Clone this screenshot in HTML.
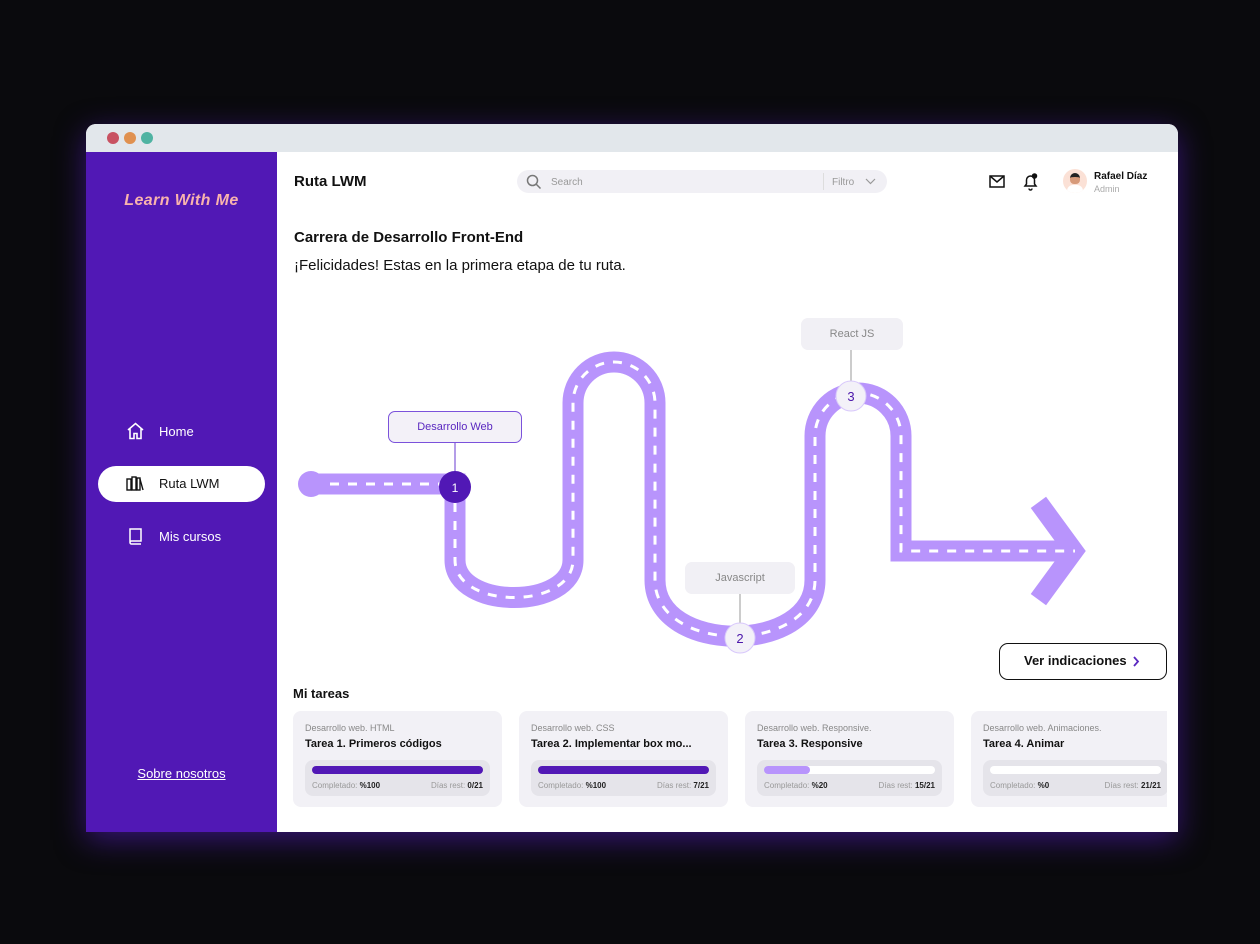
<!DOCTYPE html>
<html><head><meta charset="utf-8"><style>
*{margin:0;padding:0;box-sizing:border-box}
body{width:1260px;height:944px;background:#0a0a0d;position:relative;overflow:hidden;font-family:"Liberation Sans",Arial,sans-serif;color:#111}
.abs{position:absolute}
.win{left:86px;top:124px;width:1092px;height:708px;border-radius:10px 10px 0 0;overflow:hidden;background:#fff;box-shadow:0 8px 30px rgba(90,30,200,.55)}
.bar{left:0;top:0;width:1092px;height:28px;background:#e2e7eb}
.dot{top:8px;width:12px;height:12px;border-radius:50%}
.side{left:0;top:28px;width:191px;height:680px;background:#5118b5}
.logo{left:0;width:191px;top:40px;text-align:center;color:#f9b3ad;font:italic bold 16px "Liberation Sans",sans-serif;letter-spacing:.4px}
.nav{left:40px;color:#fff;font-size:13px;display:flex;align-items:center;gap:14px}
.card{width:209px;height:96px;background:#f2f1f6;border-radius:8px}
.card .c1{position:absolute;left:12px;top:12px;font-size:9px;color:#888}
.card .c2{position:absolute;left:12px;top:27px;font-size:11px;font-weight:bold;color:#111}
.card .pb{position:absolute;left:12px;top:49px;right:12px;height:36px;background:#e5e4ea;border-radius:8px}
.track{position:absolute;left:7px;right:7px;top:6px;height:8px;border-radius:4px;background:#fff}
.fill{height:8px;border-radius:4px}
.lbl{position:absolute;top:21px;font-size:8px;color:#999}
.lbl b{color:#222;font-weight:bold}
.tag{font-size:11px;text-align:center;border-radius:7px}
</style></head><body>
<div class="abs win">
 <div class="abs bar"></div>
 <div class="abs dot" style="left:21px;background:#c85262"></div>
 <div class="abs dot" style="left:38px;background:#e09150"></div>
 <div class="abs dot" style="left:55px;background:#4fb3a2"></div>
 <div class="abs side">
  <div class="abs logo">Learn With Me</div>
  <div class="abs nav" style="top:270px"><svg width="19" height="18" viewBox="0 0 19 18" fill="none" stroke="#fff" stroke-width="1.6"><path d="M2 8 9.5 1.5 17 8M4 6.5V16.5h4v-5h3v5h4V6.5"/></svg>Home</div>
  <div class="abs" style="left:12px;top:314px;width:167px;height:36px;background:#fff;border-radius:18px"></div>
  <div class="abs nav" style="top:323px;color:#111"><svg width="19" height="16" viewBox="0 0 19 16" fill="none" stroke="#111" stroke-width="1.4"><rect x="1" y="4" width="4" height="11"/><rect x="6" y="2" width="4" height="13"/><rect x="11" y="3" width="3" height="12"/><path d="M14 4l3 11"/></svg>Ruta LWM</div>
  <div class="abs nav" style="top:375px"><svg width="19" height="18" viewBox="0 0 19 18" fill="none" stroke="#fff" stroke-width="1.5"><path d="M4 2h11v12H5.5A1.5 1.5 0 0 0 4 15.5V2zM4 15.5A1.5 1.5 0 0 0 5.5 17H15"/></svg>Mis cursos</div>
  <div class="abs" style="left:0;width:191px;top:614px;text-align:center;color:#fff;font-size:13px;text-decoration:underline">Sobre nosotros</div>
 </div>
</div>
<!-- header -->
<div class="abs" style="left:294px;top:173px;font-size:15px;font-weight:bold">Ruta LWM</div>
<div class="abs" style="left:517px;top:170px;width:370px;height:23px;background:#f1f0f5;border-radius:12px"></div>
<svg class="abs" style="left:526px;top:174px" width="16" height="16" viewBox="0 0 16 16" fill="none" stroke="#777" stroke-width="1.5"><circle cx="6.5" cy="6.5" r="5"/><path d="M10 10l4.5 4.5"/></svg>
<div class="abs" style="left:551px;top:177px;font-size:10px;color:#999">Search</div>
<div class="abs" style="left:823px;top:173px;width:1px;height:17px;background:#ddd"></div>
<div class="abs" style="left:832px;top:177px;font-size:10px;color:#999">Filtro</div>
<svg class="abs" style="left:865px;top:178px" width="11" height="7" viewBox="0 0 11 7" fill="none" stroke="#999" stroke-width="1.2"><path d="M1 1l4.5 4.5L10 1"/></svg>
<svg class="abs" style="left:989px;top:175px" width="16" height="13" viewBox="0 0 16 13" fill="none" stroke="#111" stroke-width="1.5"><rect x="1" y="1" width="14" height="11"/><path d="M1 1l7 6 7-6"/></svg>
<svg class="abs" style="left:1022px;top:172px" width="17" height="19" viewBox="0 0 17 19" fill="none" stroke="#111" stroke-width="1.5"><path d="M3 14h11l-1.5-2V8a4 4 0 0 0-8 0v4zM7 16.5a1.5 1.5 0 0 0 3 0"/><circle cx="12.5" cy="4" r="2" fill="#111"/></svg>
<div class="abs" style="left:1063px;top:169px;width:24px;height:24px;border-radius:50%;background:#fbe1d6;overflow:hidden"><div class="abs" style="left:7px;top:4px;width:10px;height:11px;border-radius:5px 5px 4px 4px;background:#d79a7a;border-top:4px solid #222"></div><div class="abs" style="left:4px;top:16px;width:16px;height:10px;border-radius:6px 6px 0 0;background:#fff"></div></div>
<div class="abs" style="left:1094px;top:171px;font-size:10px;font-weight:bold">Rafael Díaz</div>
<div class="abs" style="left:1094px;top:184px;font-size:9px;color:#aaa">Admin</div>
<div class="abs" style="left:294px;top:229px;font-size:15px;font-weight:bold">Carrera de Desarrollo Front-End</div>
<div class="abs" style="left:294px;top:257px;font-size:15px">¡Felicidades! Estas en la primera etapa de tu ruta.</div>
<!-- road -->
<svg class="abs" style="left:0;top:0" width="1260" height="944">
 <g fill="none" stroke="#b894fc" stroke-width="21">
  <path d="M311 484H455V560C455 610 573 610 573 560V403A41 41 0 0 1 655 403V580C655 655 815 655 815 580V436A43 43 0 0 1 901 436V551H1075"/>
  <path d="M1044 510 1074 551 1044 592" stroke-width="19" stroke-linecap="square"/>
 </g>
 <circle cx="311" cy="484" r="13" fill="#b894fc"/>
 <path d="M330 484H455V560C455 610 573 610 573 560V403A41 41 0 0 1 655 403V580C655 655 815 655 815 580V436A43 43 0 0 1 901 436V551H1075" fill="none" stroke="#fff" stroke-width="3" stroke-dasharray="9 9"/>
 <line x1="455" y1="442" x2="455" y2="473" stroke="#6a3bd0"/>
 <line x1="740" y1="592" x2="740" y2="625" stroke="#999"/>
 <line x1="851" y1="350" x2="851" y2="382" stroke="#999"/>
 <circle cx="455" cy="487" r="16" fill="#5118b5"/>
 <text x="455" y="492" text-anchor="middle" fill="#fff" font-size="12" font-family="Liberation Sans">1</text>
 <circle cx="740" cy="638" r="15" fill="#f3f1f8" stroke="#d8c8fb"/>
 <text x="740" y="643" text-anchor="middle" fill="#4b16aa" font-size="13" font-family="Liberation Sans">2</text>
 <circle cx="851" cy="396" r="15" fill="#f3f1f8" stroke="#d8c8fb"/>
 <text x="851" y="401" text-anchor="middle" fill="#4b16aa" font-size="13" font-family="Liberation Sans">3</text>
</svg>
<div class="abs tag" style="left:388px;top:411px;width:134px;height:32px;line-height:30px;background:#f3f1f8;border:1px solid #7b52db;color:#5a28c0">Desarrollo Web</div>
<div class="abs tag" style="left:685px;top:562px;width:110px;height:32px;line-height:32px;background:#f1f0f5;color:#888">Javascript</div>
<div class="abs tag" style="left:801px;top:318px;width:102px;height:32px;line-height:32px;background:#f1f0f5;color:#888">React JS</div>
<div class="abs" style="left:999px;top:643px;width:168px;height:37px;border:1.5px solid #111;border-radius:9px;font-size:13px;font-weight:bold;line-height:34px;padding-left:24px">Ver indicaciones</div>
<svg class="abs" style="left:1132px;top:656px" width="8" height="11" viewBox="0 0 8 11" fill="none" stroke="#5a28c0" stroke-width="1.8"><path d="M2 1l4 4.5L2 10"/></svg>
<div class="abs" style="left:293px;top:686px;font-size:13px;font-weight:bold">Mi tareas</div>
<div class="abs" style="left:293px;top:711px;width:874px;height:96px;overflow:hidden">
 <div class="abs card" style="left:0"><div class="c1">Desarrollo web. HTML</div><div class="c2">Tarea 1. Primeros códigos</div><div class="pb"><div class="track"><div class="fill" style="width:100%;background:#5118b5"></div></div><div class="lbl" style="left:7px">Completado: <b>%100</b></div><div class="lbl" style="right:7px">Días rest: <b>0/21</b></div></div></div>
 <div class="abs card" style="left:226px"><div class="c1">Desarrollo web. CSS</div><div class="c2">Tarea 2. Implementar box mo...</div><div class="pb"><div class="track"><div class="fill" style="width:100%;background:#5118b5"></div></div><div class="lbl" style="left:7px">Completado: <b>%100</b></div><div class="lbl" style="right:7px">Días rest: <b>7/21</b></div></div></div>
 <div class="abs card" style="left:452px"><div class="c1">Desarrollo web. Responsive.</div><div class="c2">Tarea 3. Responsive</div><div class="pb"><div class="track"><div class="fill" style="width:27%;background:#b894fc"></div></div><div class="lbl" style="left:7px">Completado: <b>%20</b></div><div class="lbl" style="right:7px">Días rest: <b>15/21</b></div></div></div>
 <div class="abs card" style="left:678px"><div class="c1">Desarrollo web. Animaciones.</div><div class="c2">Tarea 4. Animar</div><div class="pb" style="right:12px"><div class="track"></div><div class="lbl" style="left:7px">Completado: <b>%0</b></div><div class="lbl" style="right:7px">Días rest: <b>21/21</b></div></div></div>
</div>
</body></html>
